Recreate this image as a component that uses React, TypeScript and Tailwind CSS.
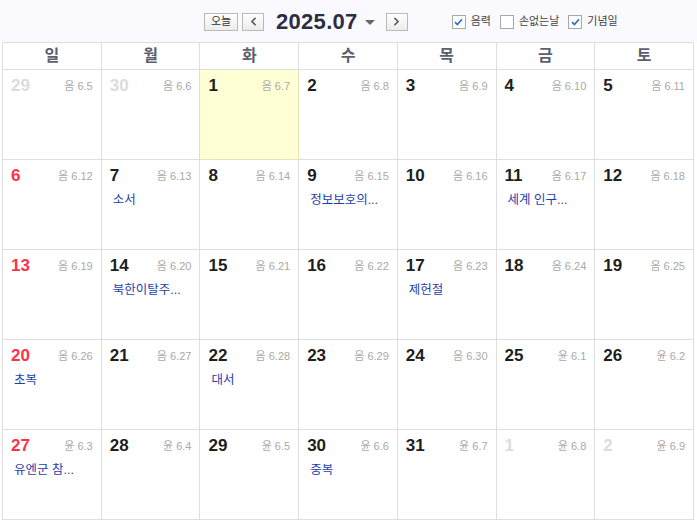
import { ChevronLeft, ChevronRight } from "lucide-react";

type Day = {
  d: number;
  lunar: string;
  out?: boolean;
  today?: boolean;
  event?: string;
};

const font = "font-['Liberation_Sans','Noto_Sans_CJK_KR',sans-serif]";

const weeks: Day[][] = [
  [
    { d: 29, lunar: "음 6.5", out: true },
    { d: 30, lunar: "음 6.6", out: true },
    { d: 1, lunar: "음 6.7", today: true },
    { d: 2, lunar: "음 6.8" },
    { d: 3, lunar: "음 6.9" },
    { d: 4, lunar: "음 6.10" },
    { d: 5, lunar: "음 6.11" },
  ],
  [
    { d: 6, lunar: "음 6.12" },
    { d: 7, lunar: "음 6.13", event: "소서" },
    { d: 8, lunar: "음 6.14" },
    { d: 9, lunar: "음 6.15", event: "정보보호의..." },
    { d: 10, lunar: "음 6.16" },
    { d: 11, lunar: "음 6.17", event: "세계 인구..." },
    { d: 12, lunar: "음 6.18" },
  ],
  [
    { d: 13, lunar: "음 6.19" },
    { d: 14, lunar: "음 6.20", event: "북한이탈주..." },
    { d: 15, lunar: "음 6.21" },
    { d: 16, lunar: "음 6.22" },
    { d: 17, lunar: "음 6.23", event: "제헌절" },
    { d: 18, lunar: "음 6.24" },
    { d: 19, lunar: "음 6.25" },
  ],
  [
    { d: 20, lunar: "음 6.26", event: "초복" },
    { d: 21, lunar: "음 6.27" },
    { d: 22, lunar: "음 6.28", event: "대서" },
    { d: 23, lunar: "음 6.29" },
    { d: 24, lunar: "음 6.30" },
    { d: 25, lunar: "윤 6.1" },
    { d: 26, lunar: "윤 6.2" },
  ],
  [
    { d: 27, lunar: "윤 6.3", event: "유엔군 참..." },
    { d: 28, lunar: "윤 6.4" },
    { d: 29, lunar: "윤 6.5" },
    { d: 30, lunar: "윤 6.6", event: "중복" },
    { d: 31, lunar: "윤 6.7" },
    { d: 1, lunar: "윤 6.8", out: true },
    { d: 2, lunar: "윤 6.9", out: true },
  ],
];

const weekdays = ["일", "월", "화", "수", "목", "금", "토"];

function Check({ checked, label }: { checked: boolean; label: string }) {
  return (
    <label className="flex items-center gap-[5px]">
      <span className="flex h-[14px] w-[14px] items-center justify-center border border-[#a8a8a8] bg-white">
        {checked && (
          <svg width="9" height="8" viewBox="0 0 9 8">
            <path d="M1 4.2 L3.4 6.5 L8 1.2" fill="none" stroke="#2b6cd0" strokeWidth="1.7" />
          </svg>
        )}
      </span>
      <span className="text-[11px] text-[#444]">{label}</span>
    </label>
  );
}

function NavButton({ children, className }: { children: React.ReactNode; className?: string }) {
  return (
    <button
      type="button"
      className={`flex h-[18px] items-center justify-center border border-[#b9b9b9] bg-gradient-to-b from-white to-[#ececec] text-[11px] text-[#333] ${className ?? ""}`}
    >
      {children}
    </button>
  );
}

export default function App() {
  return (
    <div className={`h-[522px] w-[697px] overflow-hidden bg-white ${font}`}>
      <div className="flex h-[42px] items-center bg-[#faf9fd] pl-[204px] pt-[1px]">
        <NavButton className="w-[34px]">오늘</NavButton>
        <NavButton className="ml-[4px] w-[22px]">
          <ChevronLeft size={13} strokeWidth={3} color="#555" />
        </NavButton>
        <span className="ml-[12px] text-[22px] font-bold tracking-[0.3px] text-[#2c2e45]">
          2025.07
        </span>
        <svg className="ml-[7px] mt-[2px]" width="10" height="6" viewBox="0 0 10 6">
          <path d="M0 0 L10 0 L5 5 Z" fill="#666" />
        </svg>
        <NavButton className="ml-[11px] w-[22px]">
          <ChevronRight size={13} strokeWidth={3} color="#555" />
        </NavButton>
        <div className="ml-[44px] flex items-center gap-[9px]">
          <Check checked label="음력" />
          <Check checked={false} label="손없는날" />
          <Check checked label="기념일" />
        </div>
      </div>

      <div className="ml-[2px] w-[692px] border-l border-t border-[#dedede]">
        <div className="grid h-[27px] grid-cols-7">
          {weekdays.map((w) => (
            <div
              key={w}
              className="flex items-center justify-center border-b border-r border-[#dedede] text-[16px] font-bold text-[#5b5f6e]"
            >
              {w}
            </div>
          ))}
        </div>
        {weeks.map((week, wi) => (
          <div key={wi} className="grid h-[90px] grid-cols-7">
            {week.map((day, di) => {
              const numColor = day.out
                ? "text-[#dcdcdc]"
                : di === 0
                  ? "text-[#ff3148]"
                  : "text-[#1e1e1e]";
              return (
                <div
                  key={di}
                  className={`border-b border-r px-[8px] pt-[6px] ${
                    day.today ? "border-[#e4e4b4] bg-[#ffffd6]" : "border-[#dedede]"
                  }`}
                >
                  <div className="flex items-start justify-between">
                    <span className={`text-[17px] font-bold leading-[20px] ${numColor}`}>
                      {day.d}
                    </span>
                    <span className="mt-[2px] text-[11px] text-[#a9a9a9]">{day.lunar}</span>
                  </div>
                  {day.event && (
                    <div className="mt-[5px] pl-[3px] text-[12.5px] text-[#1f3fa8]">{day.event}</div>
                  )}
                </div>
              );
            })}
          </div>
        ))}
      </div>
    </div>
  );
}
